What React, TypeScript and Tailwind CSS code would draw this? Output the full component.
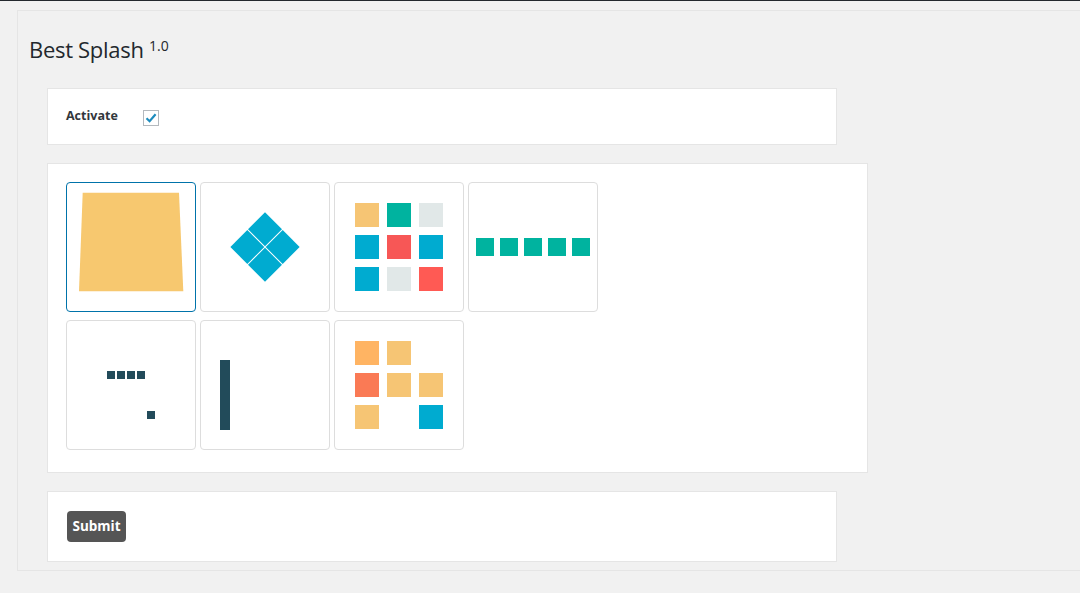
import React from "react";

const Y = "#f6c574";
const TEAL = "#00b39f";
const GRAY = "#e1e8e8";
const BLUE = "#00abd0";
const RED = "#f75756";
const RED2 = "#ff5a54";
const ORANGE = "#ffb463";
const CORAL = "#fa7a55";
const DARK = "#224b5a";

function Grid9({ colors }: { colors: (string | null)[] }) {
  const pos = [20, 52, 84];
  return (
    <svg width="128" height="128" viewBox="0 0 128 128">
      {colors.map((c, i) =>
        c ? (
          <rect key={i} x={pos[i % 3]} y={pos[Math.floor(i / 3)]} width="24" height="24" fill={c} />
        ) : null
      )}
    </svg>
  );
}

function Tile({ selected, children }: { selected?: boolean; children: React.ReactNode }) {
  return (
    <div
      className={
        "w-[130px] h-[130px] rounded-[4px] border bg-white overflow-hidden " +
        (selected ? "border-[#0073aa]" : "border-[#dddddd]")
      }
    >
      {children}
    </div>
  );
}

export default function App() {
  return (
    <div className="min-h-[593px] bg-[#f1f1f1] border-t border-[#23282d] text-[#23282d] font-['Open_Sans',sans-serif]">
      <div className="ml-[17px] mt-[9px] h-[561px] border border-r-0 border-[#e5e5e5] bg-[#f1f1f1]">
        <h1 className="pl-[11px] pt-[24px] text-[22px] leading-[28px] font-normal tracking-[-0.3px]">
          Best Splash <sup className="text-[14px] tracking-normal">1.0</sup>
        </h1>

        <div className="pl-[29px] pt-[25px] flex flex-col gap-[18px]">
          <div className="w-[790px] h-[57px] bg-white border border-[#e5e5e5] flex items-center pl-[18px]">
            <span className="text-[12.5px] font-bold text-[#32373c] w-[77px]">Activate</span>
            <span className="mt-[3px] w-[16px] h-[16px] border border-[#b4b9be] bg-white flex items-center justify-center">
              <svg width="14" height="14" viewBox="0 0 14 14">
                <path d="M2.5 7.2 L5.6 10.2 L11.6 3.2" fill="none" stroke="#1e8cbe" strokeWidth="2.2" />
              </svg>
            </span>
          </div>

          <div className="w-[821px] h-[310px] bg-white border border-[#e5e5e5] pl-[18px] pt-[18px]">
            <div className="w-[540px] flex flex-wrap gap-x-[4px] gap-y-[8px]">
              <Tile selected>
                <svg width="128" height="128" viewBox="0 0 128 128">
                  <polygon points="15.7,9.7 112,9.7 116.3,108.3 12,108.3" fill="#f7c86f" />
                </svg>
              </Tile>
              <Tile>
                <svg width="128" height="128" viewBox="0 0 128 128">
                  <g transform="rotate(45 64 64)" fill={BLUE}>
                    <rect x="39.5" y="39.5" width="24" height="24" />
                    <rect x="64.5" y="39.5" width="24" height="24" />
                    <rect x="39.5" y="64.5" width="24" height="24" />
                    <rect x="64.5" y="64.5" width="24" height="24" />
                  </g>
                </svg>
              </Tile>
              <Tile>
                <Grid9 colors={[Y, TEAL, GRAY, BLUE, RED, BLUE, BLUE, GRAY, RED2]} />
              </Tile>
              <Tile>
                <svg width="128" height="128" viewBox="0 0 128 128">
                  {[7, 31, 55, 79, 103].map((x) => (
                    <rect key={x} x={x} y="55" width="18" height="18" fill={TEAL} />
                  ))}
                </svg>
              </Tile>
              <Tile>
                <svg width="128" height="128" viewBox="0 0 128 128">
                  {[40, 50, 60, 70].map((x) => (
                    <rect key={x} x={x} y="50" width="8" height="8" fill={DARK} />
                  ))}
                  <rect x="80" y="90" width="8" height="8" fill={DARK} />
                </svg>
              </Tile>
              <Tile>
                <svg width="128" height="128" viewBox="0 0 128 128">
                  <rect x="19" y="39" width="10" height="70" fill={DARK} />
                </svg>
              </Tile>
              <Tile>
                <Grid9 colors={[ORANGE, Y, null, CORAL, Y, Y, Y, null, BLUE]} />
              </Tile>
            </div>
          </div>

          <div className="w-[790px] h-[71px] bg-white border border-[#e5e5e5] pl-[19px] pt-[19px]">
            <button className="w-[59px] h-[31px] rounded-[4px] bg-[#555555] text-white text-[13.5px] font-bold">
              Submit
            </button>
          </div>
        </div>
      </div>
    </div>
  );
}
